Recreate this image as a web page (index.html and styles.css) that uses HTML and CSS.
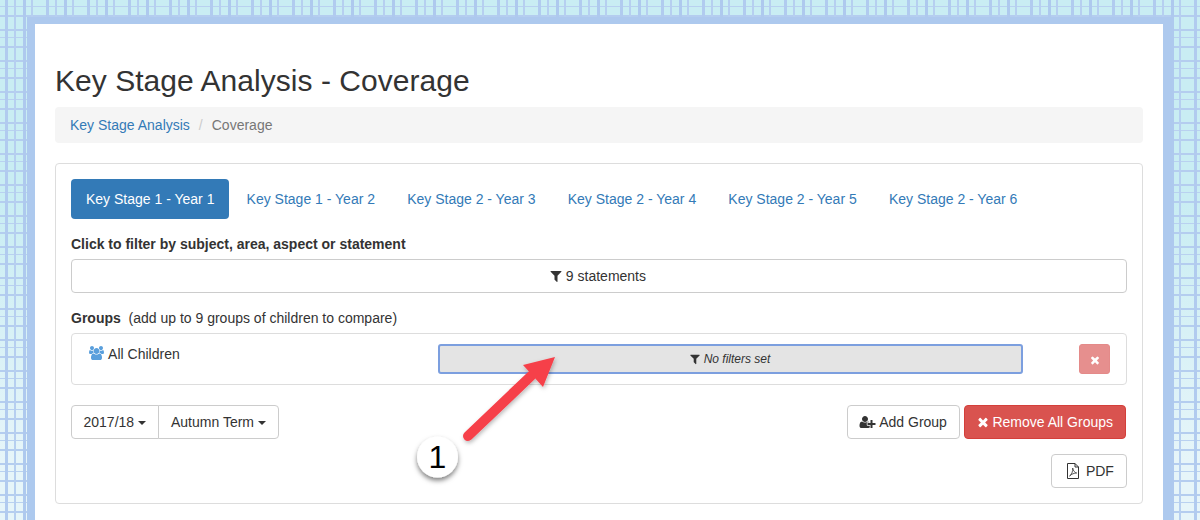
FILE: index.html
```html
<!DOCTYPE html>
<html lang="en">
<head>
<meta charset="utf-8">
<title>Key Stage Analysis - Coverage</title>
<link rel="stylesheet" href="styles.css">
</head>
<body>
<svg width="0" height="0" class="defs">
  <symbol id="i-filter" viewBox="0 0 1408 1792"><path d="M1403 295q17 41-14 70l-493 493v742q0 42-39 59-13 5-25 5-27 0-45-19l-256-256q-19-19-19-45v-486l-493-493q-31-29-14-70 17-39 59-39h1280q42 0 59 39z"/></symbol>
  <symbol id="i-times" viewBox="0 0 1408 1792"><path d="M1298 1322q0 40-28 68l-136 136q-28 28-68 28t-68-28l-294-294-294 294q-28 28-68 28t-68-28l-136-136q-28-28-28-68t28-68l294-294-294-294q-28-28-28-68t28-68l136-136q28-28 68-28t68 28l294 294 294-294q28-28 68-28t68 28l136 136q28 28 28 68t-28 68l-294 294 294 294q28 28 28 68z"/></symbol>
  <symbol id="i-users" viewBox="0 0 1920 1792"><path d="M593 896q-162 5-265 128h-134q-82 0-138-40.500t-56-118.500q0-353 124-353 6 0 43.500 21t97.500 42.500 119 21.500q67 0 133-23-5 37-5 66 0 139 81 256zm1071 637q0 120-73 189.500t-194 69.500h-874q-121 0-194-69.500t-73-189.500q0-53 3.500-103.500t14-109 26.500-108.500 43-97.500 62-81 85.500-53.500 111.500-20q10 0 43 21.500t73 48 107 48 135 21.500 135-21.500 107-48 73-48 43-21.500q61 0 111.500 20t85.500 53.500 62 81 43 97.500 26.500 108.500 14 109 3.500 103.500zm-1024-1277q0 106-75 181t-181 75-181-75-75-181 75-181 181-75 181 75 75 181zm704 384q0 159-112.500 271.500t-271.500 112.500-271.500-112.500-112.500-271.500 112.500-271.500 271.500-112.500 271.500 112.500 112.500 271.500zm576 225q0 78-56 118.500t-138 40.500h-134q-103-123-265-128 81-117 81-256 0-29-5-66 66 23 133 23 59 0 119-21.500t97.500-42.500 43.500-21q124 0 124 353zm-128-609q0 106-75 181t-181 75-181-75-75-181 75-181 181-75 181 75 75 181z"/></symbol>
  <symbol id="i-userplus" viewBox="0 0 2048 1792"><path d="M704 896q-159 0-271.500-112.500t-112.500-271.500 112.500-271.500 271.500-112.500 271.500 112.500 112.500 271.500-112.500 271.500-271.500 112.500zm960 128h352q13 0 22.500 9.500t9.500 22.500v192q0 13-9.500 22.500t-22.500 9.500h-352v352q0 13-9.500 22.500t-22.500 9.500h-192q-13 0-22.500-9.500t-9.500-22.500v-352h-352q-13 0-22.500-9.500t-9.500-22.500v-192q0-13 9.500-22.500t22.500-9.500h352v-352q0-13 9.500-22.500t22.500-9.500h192q13 0 22.500 9.500t9.500 22.500v352zm-736 224q0 52 38 90t90 38h256v238q-68 50-171 50h-874q-121 0-194-69t-73-190q0-53 3.500-103.500t14-109 26.500-108.500 43-97.500 62-81 85.500-53.500 111.500-20q19 0 39 17 79 61 154.500 91.500t164.500 30.500 164.500-30.500 154.500-91.500q20-17 39-17 132 0 217 96h-223q-52 0-90 38t-38 90v192z"/></symbol>
</svg>
<div class="frame">
  <main class="sheet">
    <h1 class="title">Key Stage Analysis - Coverage</h1>
    <nav class="crumbs"><a href="#">Key Stage Analysis</a><span class="sep">/</span><span class="here">Coverage</span></nav>
    <section class="panel">
      <ul class="tabs">
        <li class="tab active">Key Stage 1 - Year 1</li>
        <li class="tab">Key Stage 1 - Year 2</li>
        <li class="tab">Key Stage 2 - Year 3</li>
        <li class="tab">Key Stage 2 - Year 4</li>
        <li class="tab">Key Stage 2 - Year 5</li>
        <li class="tab">Key Stage 2 - Year 6</li>
      </ul>
      <p class="label"><b>Click to filter by subject, area, aspect or statement</b></p>
      <button class="btn wide"><svg class="ico"><use href="#i-filter"/></svg> 9 statements</button>
      <p class="label groups-label"><b>Groups</b>&nbsp; (add up to 9 groups of children to compare)</p>
      <div class="group">
        <div class="group-name"><svg class="ico ico-users"><use href="#i-users"/></svg> All Children</div>
        <button class="filter-bar"><svg class="ico ico-small"><use href="#i-filter"/></svg> <i>No filters set</i></button>
        <button class="del"><svg class="ico ico-small"><use href="#i-times"/></svg></button>
      </div>
      <div class="actions">
        <div class="btn-group">
          <button class="btn">2017/18 <span class="caret"></span></button><button class="btn">Autumn Term <span class="caret"></span></button>
        </div>
        <div class="actions-right">
          <button class="btn btn-add"><svg class="ico ico-add"><use href="#i-userplus"/></svg> Add Group</button>
          <button class="btn danger"><svg class="ico"><use href="#i-times"/></svg> Remove All Groups</button>
        </div>
      </div>
      <div class="pdf-row">
        <button class="btn pdf">
          <svg class="ico-pdf" viewBox="0 0 14 16"><path d="M1.500 .5h7.500l3.500 3.500v11.500h-11z M9 .5v3.500h3.500" fill="none" stroke="#333" stroke-width="1"/><path d="M3.500 13c2-1 3.500-4.500 3.200-8 .5 3 2 4.500 4 5-2.500 0-5 1-7.200 3z" fill="none" stroke="#333" stroke-width=".8"/></svg>
          PDF
        </button>
      </div>
    </section>
  </main>
</div>
<svg class="callout" viewBox="0 0 1200 520" width="1200" height="520">
  <defs>
    <filter id="sh" x="-30%" y="-30%" width="160%" height="160%"><feDropShadow dx="0" dy="3" stdDeviation="2.500" flood-color="#000" flood-opacity=".5"/></filter>
    <filter id="sh2" x="-30%" y="-30%" width="160%" height="160%"><feDropShadow dx="1" dy="2" stdDeviation="2" flood-color="#000" flood-opacity=".28"/></filter>
  </defs>
  <g filter="url(#sh2)" fill="#f6404a">
    <path d="M468 436 L531 376" stroke="#f6404a" stroke-width="10" stroke-linecap="round"/>
    <path d="M555 357 L523 365 L543 387Z"/>
  </g>
  <circle cx="437.500" cy="457" r="20.500" fill="#fff" filter="url(#sh)"/>
  <text x="437.500" y="468" class="callout-num">1</text>
</svg>
</body>
</html>
```
FILE: styles.css
```css
* { box-sizing: border-box; }
html, body { margin: 0; height: 520px; overflow: hidden; }
body {
  position: relative;
  padding: 17px 27px 0 27px;
  font: 14px/20px "Liberation Sans", Arial, sans-serif;
  color: #333;
  background-color: #c9edf3;
  background-image:
    repeating-linear-gradient(90deg, transparent 0 5px, #b1cbef 5px 8px, transparent 8px 14px, #b6cff0 14px 16px, transparent 16px 23px, #aec9ee 23px 26px, transparent 26px 31px, #b6cff0 31px 33px, transparent 33px 41px),
    repeating-linear-gradient(0deg, transparent 0 7px, #b4cdef 7px 9px, transparent 9px 17px, #b9d1f0 17px 18px, transparent 18px 24px, #b4cdef 24px 26px, transparent 26px 31px),
    linear-gradient(180deg, #c9edf3 0, #c9edf3 200px, #e6f5f9 460px);
}
.defs { position: absolute; }
.frame {
  width: 1145px;
  height: 503px;
  background: #fff;
  border: solid #adc9ee;
  border-width: 7px 9px 0 8px;
}
.sheet { padding: 0 20px; height: 100%; }
.title {
  margin: 0;
  padding-top: 40px;
  font-size: 30px;
  font-weight: 400;
  line-height: 33px;
  height: 83px;
  letter-spacing: .04px;
  color: #333;
}
.crumbs {
  height: 36px;
  padding: 8px 15px;
  background: #f5f5f5;
  border-radius: 4px;
  color: #777;
}
.crumbs a { color: #337ab7; text-decoration: none; }
.sep { color: #ccc; padding: 0 9px; }
.panel {
  margin-top: 20px;
  height: 341px;
  padding: 15px;
  border: 1px solid #ddd;
  border-radius: 4px;
}
.tabs { display: flex; gap: 2.150px; margin: 0; padding: 0; list-style: none; }
.tab { padding: 10px 15px; border-radius: 4px; color: #337ab7; }
.active { color: #fff; background: #337ab7; }
.label { margin: 15px 0 5px; height: 20px; }
.btn {
  display: inline-block;
  height: 34px;
  padding: 6px 12px;
  font: 14px/20px "Liberation Sans", Arial, sans-serif;
  color: #333;
  background: #fff;
  border: 1px solid #ccc;
  border-radius: 4px;
  white-space: nowrap;
}
.wide { display: block; width: 100%; padding-right: 14px; }
.groups-label { margin-top: 15px; margin-bottom: 5px; }
.ico { display: inline-block; width: 12px; height: 14px; fill: currentColor; vertical-align: -2px; }
.group {
  display: flex;
  align-items: flex-start;
  height: 52px;
  padding: 10px 16px;
  border: 1px solid #ddd;
  border-radius: 4px;
}
.group-name { width: 350px; }
.ico-users { width: 17px; height: 14px; margin-left: -.5px; margin-right: .5px; fill: #5a9fdc; vertical-align: -1px; }
.filter-bar {
  width: 586px;
  height: 30px;
  padding: 0;
  font: 12px/18px "Liberation Sans", Arial, sans-serif;
  color: #333;
  background: #e4e4e4;
  border: 2px solid #7c9fdf;
  border-radius: 3px;
}
.ico-small { width: 10px; height: 12px; }
.del {
  width: 31px;
  height: 30px;
  margin-left: 56px;
  padding: 0;
  color: #fff;
  background: #e68f8e;
  border: 1px solid #e48a89;
  border-radius: 3px;
}
.actions { display: flex; justify-content: space-between; margin-top: 20px; }
.btn-group { display: flex; }
.btn-group .btn { padding-left: 11.500px; }
.btn-group .btn:first-child { border-radius: 4px 0 0 4px; }
.btn-group .btn:last-child { border-radius: 0 4px 4px 0; margin-left: -1px; padding-left: 12px; padding-right: 12px; }
.caret {
  display: inline-block;
  width: 0;
  height: 0;
  vertical-align: middle;
  border-top: 4px solid #333;
  border-left: 4px solid transparent;
  border-right: 4px solid transparent;
}
.actions-right { display: flex; gap: 4px; margin-right: 1px; }
.ico-add { width: 17px; }
.btn-add { width: 113px; padding: 6px 0; }
.danger { color: #fff; background: #d9534f; border-color: #d43f3a; }
.pdf-row { display: flex; justify-content: flex-end; margin-top: 15px; }
.pdf { padding: 6px 14px; width: 76px; }
.ico-pdf { width: 14px; height: 16px; vertical-align: -3px; margin-right: 2px; }
.callout { position: absolute; left: 0; top: 0; pointer-events: none; }
.callout-num { font: 32px "Liberation Sans", Arial, sans-serif; fill: #000; text-anchor: middle; }
```
